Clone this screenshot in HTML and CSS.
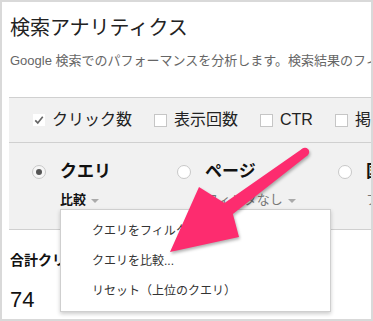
FILE: index.html
```html
<!DOCTYPE html>
<html lang="ja">
<head>
<meta charset="utf-8">
<link rel="stylesheet" href="styles.css">
</head>
<body>
<div class="page">
  <h1 class="title">検索アナリティクス</h1>
  <p class="desc">Google 検索でのパフォーマンスを分析します。検索結果のフィルタリングや比較を行えます。</p>

  <div class="panel">
    <div class="metrics">
      <label class="metric">
        <span class="box checked">
          <svg viewBox="0 0 12 12" width="12" height="12"><polyline points="1.5,6.5 4.5,9.5 10.5,2" fill="none" stroke="#666" stroke-width="2"/></svg>
        </span>
        <span class="metric-label">クリック数</span>
      </label>
      <label class="metric">
        <span class="box"></span>
        <span class="metric-label">表示回数</span>
      </label>
      <label class="metric">
        <span class="box"></span>
        <span class="metric-label">CTR</span>
      </label>
      <label class="metric">
        <span class="box"></span>
        <span class="metric-label">掲載順位</span>
      </label>
    </div>

    <div class="dims">
      <div class="dim dim-query">
        <div class="dim-head">
          <span class="radio selected"></span>
          <span class="dim-label">クエリ</span>
        </div>
        <div class="dim-sub active">比較 <span class="caret"></span></div>
      </div>
      <div class="dim dim-page">
        <div class="dim-head">
          <span class="radio"></span>
          <span class="dim-label">ページ</span>
        </div>
        <div class="dim-sub">フィルタなし <span class="caret"></span></div>
      </div>
      <div class="dim">
        <div class="dim-head">
          <span class="radio"></span>
          <span class="dim-label">国</span>
        </div>
        <div class="dim-sub">フィルタなし <span class="caret"></span></div>
      </div>
    </div>
  </div>

  <div class="totals">
    <div class="total-label">合計クリック数</div>
    <div class="total-value">74</div>
  </div>

  <ul class="menu">
    <li>クエリをフィルタ...</li>
    <li>クエリを比較...</li>
    <li>リセット（上位のクエリ）</li>
  </ul>

  <svg class="arrow" viewBox="0 0 373 321" width="373" height="321">
    <g class="arrow-shape">
      <circle cx="305" cy="152" r="4.2"/>
      <path d="M302.6 148.6 L224.5 202.9 L199 187 L170 252 L239 237 L232.9 214.1 L307.4 155.4 Z"/>
    </g>
  </svg>
</div>
</body>
</html>
```

FILE: styles.css
```css
html, body {
  margin: 0;
  padding: 0;
  background: #fff;
}

body {
  font-family: "Liberation Sans", "Noto Sans CJK JP", sans-serif;
  color: #222;
}

.page {
  position: relative;
  width: 373px;
  height: 321px;
  box-sizing: border-box;
  border: 2px solid #d9d9d9;
  overflow: hidden;
  background: #fff;
}

.title {
  margin: 0;
  padding: 15px 0 0 8px;
  font-size: 20px;
  line-height: 22px;
  font-weight: normal;
  color: #222;
  white-space: nowrap;
}

.desc {
  margin: 0;
  padding: 13px 0 0 8px;
  font-size: 13px;
  line-height: 18px;
  color: #666;
  white-space: nowrap;
}

.panel {
  margin: 27px 0 0 7px;
  background: #f1f1f1;
  border-top: 1px solid #d0d0d0;
  border-bottom: 1px solid #d0d0d0;
  width: 460px;
}

.metrics {
  display: flex;
  align-items: center;
  gap: 22px;
  height: 44px;
  padding-left: 24px;
  border-bottom: 1px solid #d0d0d0;
  white-space: nowrap;
}

.metric {
  display: flex;
  align-items: center;
  gap: 7px;
  flex-shrink: 0;
}

.box {
  display: inline-flex;
  align-items: center;
  justify-content: center;
  width: 13px;
  height: 13px;
  box-sizing: border-box;
  background: #fff;
  border: 1px solid #c6c6c6;
}

.box.checked {
  border-color: #fff;
  width: 12px;
  height: 12px;
}

.metric-label {
  font-size: 16px;
  line-height: 20px;
  color: #222;
}

.dims {
  display: flex;
  height: 86px;
  padding-left: 23px;
  white-space: nowrap;
}

.dim {
  padding-top: 19px;
  flex-shrink: 0;
}

.dim-query { width: 145px; }
.dim-page { width: 161px; }

.dim-head {
  display: flex;
  align-items: center;
  gap: 14px;
  height: 20px;
}

.radio {
  width: 14px;
  height: 14px;
  box-sizing: border-box;
  border-radius: 50%;
  border: 1px solid #c8c8c8;
  background: #fff;
  display: inline-flex;
  align-items: center;
  justify-content: center;
}

.radio.selected::after {
  content: "";
  width: 6px;
  height: 6px;
  border-radius: 50%;
  background: #555;
}

.radio.selected {
  background: #f6f6f6;
}

.dim-label {
  font-size: 17px;
  font-weight: bold;
  line-height: 20px;
  color: #111;
}

.dim-sub {
  margin: 10px 0 0 28px;
  font-size: 13px;
  line-height: 16px;
  color: #777;
  display: flex;
  align-items: center;
  gap: 2px;
}

.dim-sub.active {
  color: #111;
  font-weight: bold;
}

.caret {
  display: inline-block;
  width: 0;
  height: 0;
  border-left: 4px solid transparent;
  border-right: 4px solid transparent;
  border-top: 4px solid #aaa;
  margin-left: 3px;
  margin-top: 2px;
}

.totals {
  padding: 21px 0 0 8px;
}

.total-label {
  font-size: 14px;
  font-weight: bold;
  line-height: 18px;
  color: #111;
  white-space: nowrap;
}

.total-value {
  margin-top: 19px;
  font-size: 22px;
  line-height: 24px;
  color: #111;
}

.menu {
  position: absolute;
  left: 58px;
  top: 207px;
  width: 271px;
  height: 103px;
  box-sizing: border-box;
  margin: 0;
  padding: 6px 0 0 0;
  list-style: none;
  background: #fff;
  border: 1px solid #cfcfcf;
  box-shadow: 0 2px 4px rgba(0, 0, 0, 0.2);
}

.menu li {
  height: 30px;
  line-height: 30px;
  padding-left: 31px;
  font-size: 12px;
  color: #333;
  white-space: nowrap;
}

.arrow {
  position: absolute;
  left: -2px;
  top: -2px;
  pointer-events: none;
  filter: drop-shadow(1px 2px 1.5px rgba(0, 0, 0, 0.3));
}

.arrow-shape {
  fill: #fd2c6f;
}
```
